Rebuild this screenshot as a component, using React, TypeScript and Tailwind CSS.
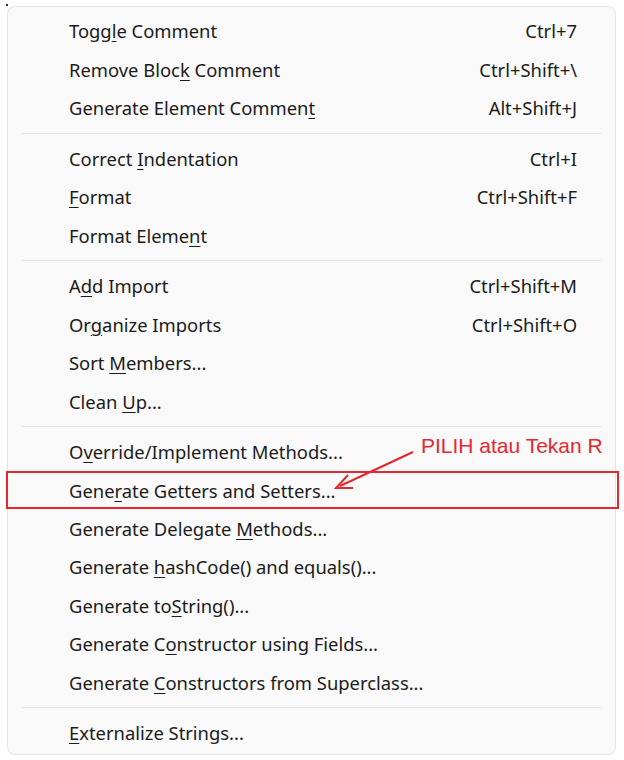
import React from "react";

type Item = { pre: string; key: string; post: string; shortcut?: string };

const groups: Item[][] = [
  [
    { pre: "Togg", key: "l", post: "e Comment", shortcut: "Ctrl+7" },
    { pre: "Remove Bloc", key: "k", post: " Comment", shortcut: "Ctrl+Shift+\\" },
    { pre: "Generate Element Commen", key: "t", post: "", shortcut: "Alt+Shift+J" },
  ],
  [
    { pre: "Correct ", key: "I", post: "ndentation", shortcut: "Ctrl+I" },
    { pre: "", key: "F", post: "ormat", shortcut: "Ctrl+Shift+F" },
    { pre: "Format Eleme", key: "n", post: "t" },
  ],
  [
    { pre: "A", key: "d", post: "d Import", shortcut: "Ctrl+Shift+M" },
    { pre: "Or", key: "g", post: "anize Imports", shortcut: "Ctrl+Shift+O" },
    { pre: "Sort ", key: "M", post: "embers..." },
    { pre: "Clean ", key: "U", post: "p..." },
  ],
  [
    { pre: "O", key: "v", post: "erride/Implement Methods..." },
    { pre: "Gene", key: "r", post: "ate Getters and Setters..." },
    { pre: "Generate Delegate ", key: "M", post: "ethods..." },
    { pre: "Generate ", key: "h", post: "ashCode() and equals()..." },
    { pre: "Generate to", key: "S", post: "tring()..." },
    { pre: "Generate C", key: "o", post: "nstructor using Fields..." },
    { pre: "Generate ", key: "C", post: "onstructors from Superclass..." },
  ],
  [{ pre: "", key: "E", post: "xternalize Strings..." }],
];

function Row({ item }: { item: Item }) {
  return (
    <div className="flex h-[38.4px] items-center justify-between pl-[61px] pr-[38px]">
      <span>
        {item.pre}
        <span className="underline decoration-1 underline-offset-[3px]">{item.key}</span>
        {item.post}
      </span>
      {item.shortcut && <span>{item.shortcut}</span>}
    </div>
  );
}

export default function App() {
  return (
    <div className="relative h-[760px] w-[624px] bg-white pl-[7px] pr-[8px] pt-[6px] font-['Noto_Sans',sans-serif] text-[18.4px] text-[#1b1b1b]">
      <div className="absolute left-[6px] top-[4px] h-[2px] w-[2px] bg-[#333]" />
      <div className="rounded-[8px] border border-[#e3e3e3] border-t-[#dfe5f2] bg-[#f9f9f9] pb-[2px] pt-[5px]">
        {groups.map((g, gi) => (
          <div key={gi}>
            {gi > 0 && (
              <div className="flex h-[12.3px] items-center px-[14px]">
                <div className="h-px w-full bg-[#e2e2e2]" />
              </div>
            )}
            {g.map((it, i) => (
              <Row key={i} item={it} />
            ))}
          </div>
        ))}
      </div>

      {/* annotation overlay */}
      <div className="absolute left-[6px] top-[471px] h-[38px] w-[613px] border-2 border-[#e3282e]" />
      <div className="absolute left-[421px] top-[432px] font-['Liberation_Sans',sans-serif] text-[21px] leading-[28px] text-[#e3282e]">
        PILIH atau Tekan R
      </div>
      <svg className="absolute left-0 top-0" width="624" height="760" viewBox="0 0 624 760">
        <line x1="413" y1="452" x2="340" y2="486" stroke="#e3282e" strokeWidth="2" />
        <polyline points="348,475 336,488 353,488" fill="none" stroke="#e3282e" strokeWidth="2" />
      </svg>
    </div>
  );
}
